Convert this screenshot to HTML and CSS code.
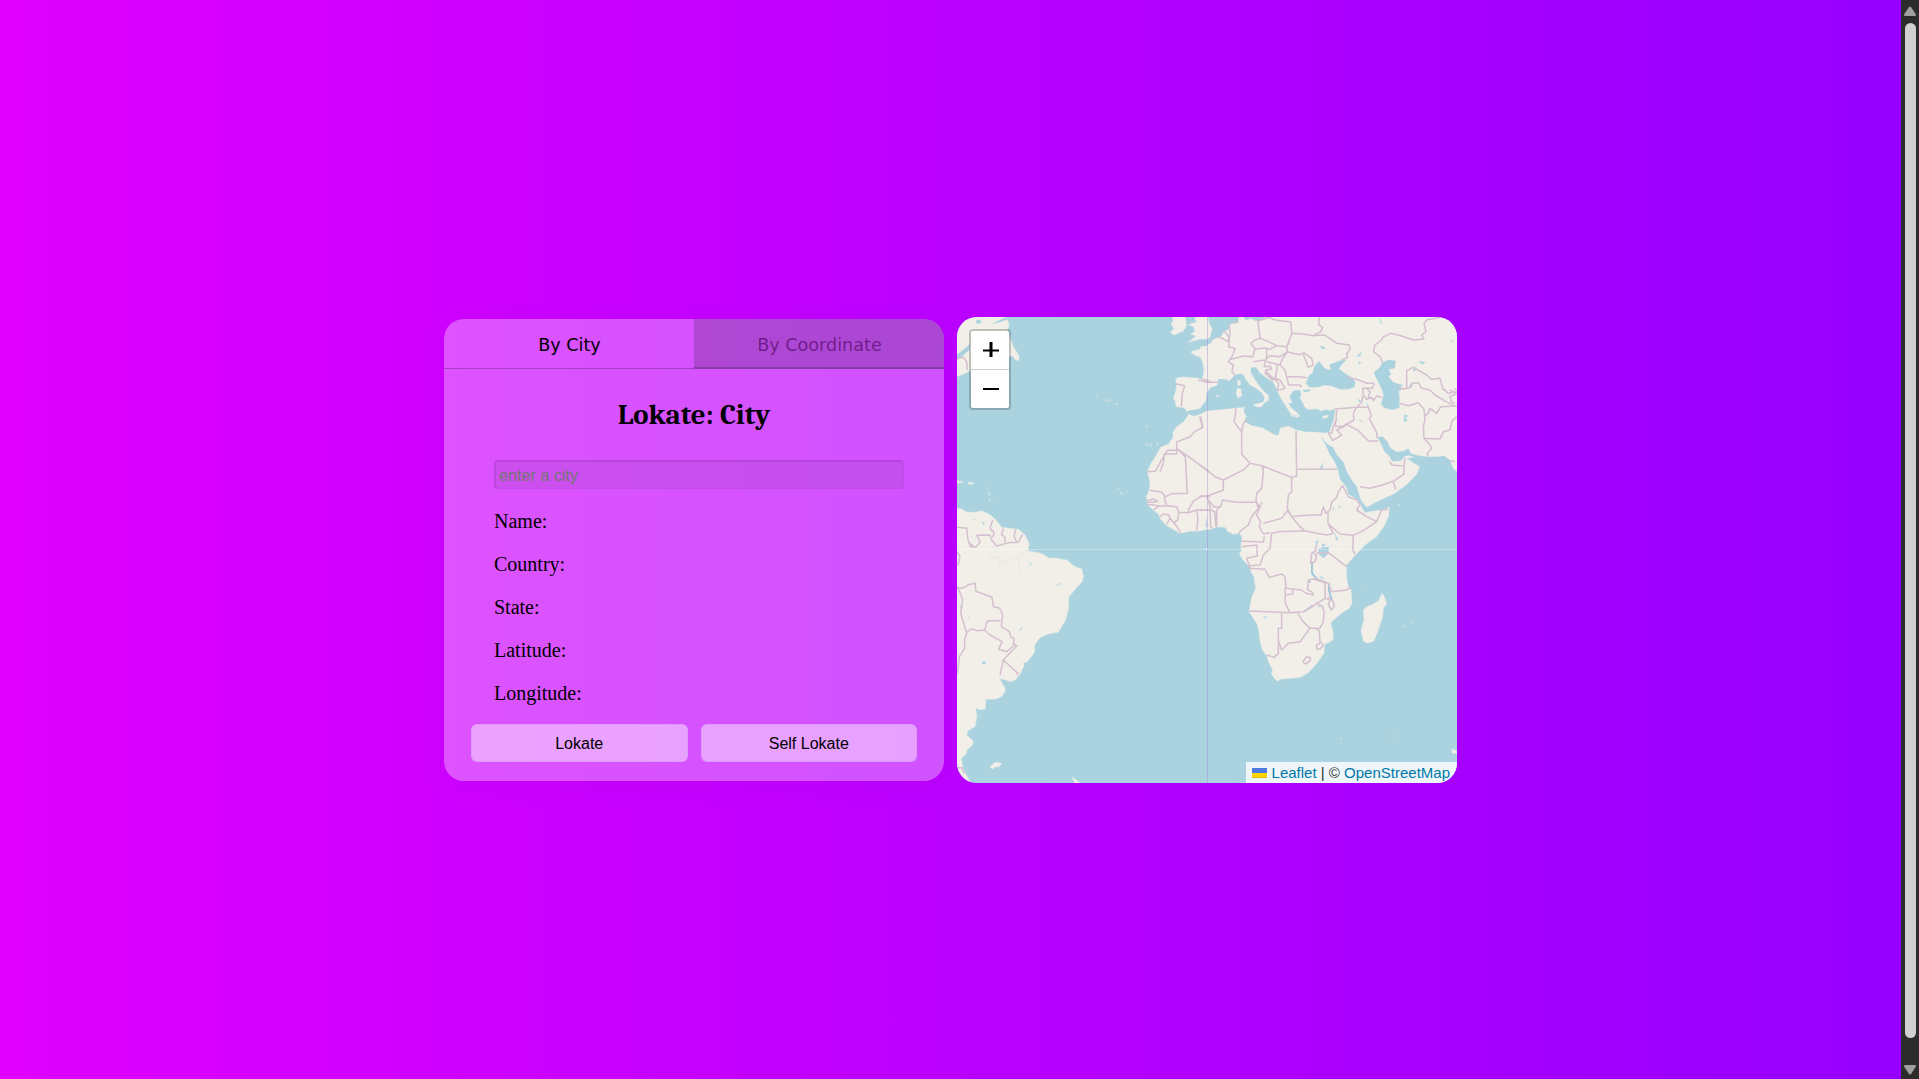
FILE: index.html
```html
<!DOCTYPE html>
<html lang="en">
<head>
<meta charset="utf-8">
<title>Lokate</title>
<link rel="stylesheet" href="styles.css">
</head>
<body>
<main class="page">
  <section class="card">
    <nav class="tabs">
      <button class="tab tab-active">By City</button>
      <button class="tab tab-idle">By Coordinate</button>
    </nav>
    <h2 class="title">Lokate: City</h2>
    <div class="fields">
      <input class="city" type="text" placeholder="enter a city">
      <p>Name:</p>
      <p>Country:</p>
      <p>State:</p>
      <p>Latitude:</p>
      <p>Longitude:</p>
    </div>
    <div class="actions">
      <button class="action">Lokate</button>
      <button class="action">Self Lokate</button>
    </div>
  </section>
  <section class="map">
    <svg class="world" viewBox="21 21 1500 1398" preserveAspectRatio="none">
      <rect x="0" y="0" width="1540" height="1440" fill="#aad3df"/>
      <g class="tiles">
      <g class="land">
        <!-- Newfoundland and Labrador -->
        <path d="M0 0H160L178 45L172 60L190 110L208 138L206 152L196 150L188 138L165 140L150 130L120 150L70 175L50 188L21 200L0 205Z"/>
        <!-- Ireland, Great Britain -->
        <path d="M665 10L705 10L709 48L700 64L690 67L672 76L660 67L672 57L663 40L670 34Z"/>
        <path d="M740 10H772L781 47L789 56L788 76L772 88L750 91L735 97L711 99L738 78L722 72L735 64L730 50L715 44L740 36L734 26Z"/>
        <!-- Europe, Asia and Africa -->
        <path d="M865 10L862 34L840 43L836 58L822 66L812 80L790 88L783 98L770 108L752 109L750 118L730 122L722 126L735 136L750 141L758 160L762 180L757 206L730 203L702 201L690 202L682 203L676 212L680 222L678 240L670 265L676 275L678 290L690 292L702 293L712 306L715 316L700 336L680 350L669 366L669 382L656 402L632 411L616 440L603 460L592 485L597 502L600 523L596 545L588 560L593 572L592 582L609 600L625 612L633 630L650 647L664 655L690 670L720 664L745 664L762 660L782 658L800 651L826 652L832 664L848 672L870 671L876 684L872 710L874 722L868 732L879 750L900 772L903 785L912 800L914 817L917 835L905 862L897 905L910 925L921 942L927 967L930 995L938 1022L950 1037L956 1057L968 1080L963 1090L973 1105L982 1114L995 1107L1025 1105L1052 1102L1075 1088L1100 1061L1122 1030L1124 1003L1138 997L1150 989L1149 965L1142 938L1160 922L1180 906L1198 895L1206 880L1203 838L1195 830L1190 800L1190 765L1210 742L1245 705L1280 680L1301 651L1316 619L1318 590L1300 600L1270 603L1245 608L1234 590L1228 570L1222 556L1250 592L1280 575L1335 550L1372 522L1400 493L1409 470L1390 458L1370 445L1400 440L1460 440L1482 437L1500 450L1510 475L1540 500V10Z"/>
        <!-- Madagascar -->
        <path d="M1297 850L1303 860L1310 882L1301 893L1298 920L1285 960L1272 993L1252 1000L1240 994L1233 960L1242 928L1240 900L1250 890L1270 882L1285 872Z"/>
        <!-- South America -->
        <path d="M0 590L35 597L50 606L75 607L95 602L112 610L125 618L140 632L155 652L180 655L205 658L225 674L238 702L233 722L258 727L278 731L296 744L315 744L350 750L375 770L395 776L401 800L396 815L376 838L357 860L355 900L346 932L325 967L295 972L270 983L254 1005L254 1027L240 1045L222 1068L210 1093L195 1111L180 1115L165 1109L148 1106L160 1125L167 1140L155 1160L135 1168L108 1168L106 1197L92 1200L77 1195L81 1220L75 1250L54 1262L50 1274L60 1284L70 1294L68 1305L51 1320L49 1332L34 1345L38 1370L44 1387L70 1430H0Z"/>
        <path d="M120 1371L135 1357L155 1360L148 1370L135 1371L128 1378ZM366 1402L380 1410L392 1421L375 1419ZM0 505L40 517L30 519L0 516ZM54 517L70 518L70 523L56 523ZM1506 1316L1516 1321L1530 1330L1506 1330Z"/>
      </g>
      <g class="isles">
        <path d="M466 271h10M479 271l5 1M497 280l7 4M587 350h6M586 404h8M598 403l8 5M619 406l7-8M504 534l4 3M511 546l7 8M528 545h4M108 532l4 4M116 545l3 12M119 565v8M78 1222h6M86 1218h6M1360 949h6M1384 938h4M1171 1286h5M1325 1278h5M1343 584h7M1234 843h2M438 260h4M136 578h2"/>
      </g>
      <g class="sea" transform="translate(750 0)">
        <!-- Mediterranean, west to east -->
        <path d="M-38 303L-25 301L0 296L8 285L18 272L20 252L30 235L52 226L56 207L75 208L88 213L105 195L120 191L130 195L138 210L150 226L168 235L185 248L193 264L190 275L175 280L157 285L172 292L185 291L192 280L206 272L207 257L192 244L180 230L163 205L152 186L154 173L168 172L179 188L199 204L219 216L229 236L240 262L253 282L264 299L272 312L290 317L302 320L292 308L275 294L265 280L278 280L269 260L280 242L300 240L303 252L299 263L308 278L312 289L323 299L350 297L363 304L376 299L392 302L405 297L401 328L388 366L372 368L350 366L318 365L288 359L265 347L240 354L234 376L222 373L205 363L188 353L155 346L132 334L140 320L131 302L135 291L110 293L55 299L20 302L0 313L-18 317L-38 311Z"/>
        <!-- Black Sea -->
        <path d="M318 221L326 198L338 188L344 168L357 154L366 164L372 173L384 179L394 178L390 169L388 164L410 156L430 149L438 150L424 165L416 176L430 187L451 200L466 215L464 230L446 237L420 238L398 229L376 225L355 231L330 232ZM308 241L331 238L329 244L312 246Z"/>
        <!-- Caspian Sea -->
        <path d="M522 187L538 174L549 157L567 149L587 153L584 175L565 178L573 192L565 200L580 217L600 224L604 239L595 244L598 260L598 293L577 299L552 293L543 281L548 267L551 253L544 235L534 214L528 203Z"/>
        <!-- Red Sea, Persian Gulf -->
        <path d="M365 382L374 394L386 406L399 412L410 434L430 457L440 485L455 510L470 530L482 571L486 590L470 567L445 552L440 532L420 507L415 480L403 453L388 430L380 411Z"/>
        <path d="M533 382L548 380L561 394L571 414L590 426L610 424L625 416L633 431L660 438L680 441L650 443L626 436L615 438L603 452L576 454L568 437L554 425L544 403Z"/>
        <path d="M25 10L28 40L38 55L31 80L60 78L72 58L90 42L115 35L116 10ZM120 10H190V26L165 33L155 25L138 30Z"/>
        <path d="M-40 98L0 88L24 88L34 96L18 106L-10 111L-25 108ZM0 140L8 160L8 190L0 210Z" opacity=".8"/>
        <!-- Lakes -->
        <path d="M355 716L386 710L385 730L372 744L358 735Z"/>
        <path d="M358 107L373 111L377 117L366 116ZM470 140L486 124L480 138ZM474 154L484 158L478 162ZM539 24L547 44L541 38ZM659 154L676 157L670 162L660 159ZM649 166L643 177ZM613 314L626 318L616 322L622 332L612 335ZM479 328L486 336L480 334ZM472 268L484 272L478 276ZM499 278L508 291L502 288ZM580 222L608 224L600 232ZM726 236L740 241L730 242ZM370 458L367 475L359 476ZM398 602L400 592L403 595ZM415 587L423 590L418 593ZM405 670L414 690L408 691ZM366 700L376 704L368 714ZM347 694L355 692L350 708ZM752 91L760 95L754 97ZM18 625L23 652L18 650Z"/>
        <path class="lake" d="M336 755L336 790L352 808M388 820L386 840L396 870M630 228L637 224M313 905L338 886M327 812L330 818M641 183L645 178"/>
        <path d="M358 798L372 805L366 807ZM190 920L202 920L196 925ZM352 887L366 890L360 892Z"/>
        <!-- Islands in the Mediterranean -->
        <path class="isle" d="M112 210L122 212L121 226L114 228ZM112 235L123 236L125 258L113 265L109 250ZM366 319L386 315L382 323L370 325ZM272 314L297 319L293 322L273 318ZM48 256L57 257L54 262Z"/>
      </g>
      <g class="sea">
        <path d="M21 134L60 103L58 120L40 135L21 150ZM76 34L88 28L94 36L84 42ZM128 40L170 21L176 26L150 36ZM98 635L104 640L100 645ZM96 1055L108 1056L106 1062L96 1061ZM28 885L38 892L34 897ZM318 826L336 819L326 825ZM208 960L217 952L212 962ZM236 755L247 766L241 764ZM220 1060L235 1056L225 1070ZM70 627h5v5ZM53 920l5 2l-3 2Z"/>
      </g>
      <g class="rivers">
        <path d="M112 735L135 747L160 758L180 745L210 740L228 718M150 758V790M210 740L205 760L212 805M118 742L140 740L165 752"/>
      </g>
      <g class="borders">
        <!-- Atlantic side -->
        <path d="M21 145L40 142L50 155L52 180M755 205L765 210L780 214M678 222L685 223L704 227L697 250L694 290M749 319L758 353L735 364L720 380L680 396L680 432M680 415L706 440L712 550L665 551L647 560L634 546L599 541M680 415L720 443L780 487M680 420L652 421L632 455L616 484L592 485M680 432L643 432L640 460L630 485M592 572L610 567L624 574L608 577L592 577M592 583L630 588L650 587L642 560M650 587L680 590L686 607L716 608L740 600L780 601M716 608L715 600L730 574L755 557L780 560M610 600L625 590M630 620L640 612L655 614L660 625L650 643M660 625L678 646M686 607L683 630L672 637L692 668M740 600L744 628L740 662M21 652L50 655L54 690L62 710L78 710L90 697L81 676L120 675L125 690L140 708L175 698L205 697L218 672M128 630L120 655L132 667L128 683M160 655L155 674L165 682L165 696M197 658L192 678L200 696M21 836L45 832L55 824L75 820L78 844L126 862L130 890L148 894L158 914L154 950L178 965L182 980L192 986L190 1008L170 1025L146 1018L156 995L120 975L104 960L112 932L152 932M104 960L84 962L64 957L50 968L38 930L32 910L38 870L24 830M50 968L44 990L44 1015L28 1040L22 1090M188 997L200 1008L160 1050L204 1090L200 1095M160 1050L150 1095M22 725L30 740L24 765M55 697L70 708M21 1373L35 1373L42 1390"/>
        <!-- Europe and the Middle East -->
        <path transform="translate(750 0)" d="M55 80L88 96L86 110L105 116L96 140L85 155L100 165L96 185L105 195M70 60L85 78L88 96M88 42L90 70L86 96M115 35L100 40M174 28L176 60L182 85L165 90L153 100L165 117L158 140L130 138L105 145L86 150M182 85L212 98L230 107L210 118L195 114L165 117M230 107L260 110L262 126L240 140L210 137L195 150L160 155M200 118L200 140L192 170L210 168L215 178L195 180M176 32L208 22L225 30L272 36L276 70L268 90L260 112M276 70L310 72L340 77L362 65L368 52L356 44L358 22M268 90L265 105M340 77L372 74L400 92L410 100L448 105L450 118L440 132L443 142L425 150M262 126L300 134L312 128L335 145L340 165L325 172L308 128M262 126L248 145L240 165L220 160L200 155M240 165L255 180L260 200L300 200L320 203M232 165L226 205L240 210L255 235L240 240M260 200L266 225L300 225L305 232M226 205L236 222L232 240L240 240M195 182L228 212M205 187L195 190L220 212M-5 210L20 217L55 217M520 125L525 105L545 90L548 82L572 70L605 78L640 90L672 87L665 75L678 65L672 40L680 30L720 22M520 125L540 140L548 160M440 202L470 208L500 220L522 220L518 235L488 235L490 255L500 268L515 262L520 272L530 258L545 262M500 235L510 245L505 260L515 266M620 232V182L640 172L680 195L695 208L720 205L728 235L745 250L765 245M595 232L610 237L632 232L636 220L655 218L665 235L690 240L705 255L738 275L770 290M750 255L754 275L765 280M750 240L770 250L755 258M765 235L770 245M598 280L625 287L655 278L672 298L675 330L670 350L672 385L690 405L695 415L682 430L684 438M672 385L720 387L730 365L750 360L755 335L770 320M672 320L685 310L690 295L710 310L722 290L770 288M750 452L765 455M405 297L470 292L486 275L488 258M410 300L408 330L400 350M470 292L460 310L462 330L410 360M470 292L505 292L514 318L508 325L530 368L532 385M410 325L404 348L432 350L437 342L475 362L505 393L535 393M400 350L395 370L385 368L398 392L425 375L410 360L432 350M568 455L576 465L612 468L615 445M612 468L612 492L580 514L540 527L508 535L480 530M580 514L587 538"/>
        <!-- Africa -->
        <path transform="translate(750 0)" d="M107 294V310L102 335L125 365L130 340L142 330M125 365V432L132 440L150 460L186 467L273 502L290 498L288 363M290 478H412M150 460L130 480L70 510L45 500L0 465M0 355L8 350L2 320M70 510V540L28 556L0 560M28 556L20 562L40 590L62 590L68 570L90 574L110 577L170 576L178 590L155 620L145 645L125 660L115 670M186 467L190 485L185 535L170 550L168 570L176 600M186 575L170 615L182 635L178 650L190 672L210 668M275 502V545L265 555L262 595L275 620L262 602L245 625L190 640M275 620L290 618L330 615L363 615L370 590L377 610L390 600L396 575L410 562L415 545L428 527L445 560L470 570L482 585M275 620L300 650L313 662L350 670L380 675L400 670L384 640L384 605M313 662L235 665L215 670L210 715L190 735L180 765L150 767M384 640L400 655L420 672L460 676L490 662L530 635L545 600L565 597M530 635L500 620L470 600L482 580M460 676L458 720L465 732M0 601L30 600L32 650L38 655M25 570L32 600L44 605L48 650M62 590L50 600L50 650M125 694L190 696L193 680M125 710L170 705L172 738L140 745L150 775L195 778L208 802L245 792L255 800L258 835L305 840L318 850L340 855L335 845L323 840L325 810L340 807L375 818L376 865L350 880L340 888L310 905L270 908L148 903M255 835L256 880L270 908M278 835V852L258 855M245 910V955H235V1030L222 1042L200 1035M290 905L310 935L330 955L360 955L370 935L372 905L368 890L350 880M330 955L300 995L265 1000L245 1020L235 990M345 955L358 962L360 995L370 1005L360 1018L350 1016L350 1005L360 1000M310 1053L320 1040L332 1043L330 1052L318 1062L310 1058ZM350 720L335 730L332 760L345 755L350 735L340 730M350 728L385 728L440 770M350 705L345 725M345 805L385 820L395 845L440 840L452 832M376 865L390 870L385 885L395 900L402 890L400 875L385 860"/>
      </g>
      </g>
      <path class="seam" d="M21 718.5H1521"/>
      <path class="meridian" d="M772.5 21V1419"/>
      <path d="M768 714h3v6h-3Z" fill="#fff"/>
    </svg>
    <div class="zoom">
      <button class="zoom-btn" aria-label="Zoom in"><svg viewBox="0 0 16 16"><path d="M0 8.5H16" stroke-width="2"/><path d="M8 0V15" stroke-width="3"/></svg></button>
      <button class="zoom-btn" aria-label="Zoom out"><svg viewBox="0 0 16 16"><path d="M0 8H16" stroke-width="2"/></svg></button>
    </div>
    <div class="credit"><svg class="flag" viewBox="0 0 15 10"><path d="M0 0H15V5H0Z" fill="#4c7be1"/><path d="M0 5H15V10H0Z" fill="#ffd500"/><path d="M0 9H15V10H0Z" fill="#e0bc00"/></svg> <a>Leaflet</a> | © <a>OpenStreetMap</a></div>
  </section>
</main>
<aside class="scrollbar">
  <svg class="arrow" viewBox="0 0 12 10"><path d="M6 0.5Q6.6 0.5 7 1L12 8.5Q12 10 11 10H1Q0 10 0 8.5L5 1Q5.4 0.5 6 0.5Z"/></svg>
  <div class="thumb"></div>
  <svg class="arrow" viewBox="0 0 12 10"><path d="M6 9.5Q6.6 9.5 7 9L12 1.5Q12 0 11 0H1Q0 0 0 1.5L5 9Q5.4 9.5 6 9.5Z"/></svg>
</aside>
</body>
</html>
```
FILE: styles.css
```css
* { box-sizing: border-box; }
body {
  margin: 0;
  height: 1079px;
  display: flex;
  overflow: hidden;
  font-family: "Liberation Serif", serif;
}
.page {
  flex: 1;
  display: flex;
  justify-content: center;
  align-items: center;
  gap: 13px;
  padding-top: 21px;
  background: linear-gradient(to right, #e000ff, #9500ff);
}
.card {
  width: 500px;
  height: 462px;
  border-radius: 20px;
  overflow: hidden;
  background: rgba(255, 255, 255, .32);
  box-shadow: 0 4px 30px rgba(0, 0, 0, .04);
}
.tabs { display: flex; height: 50px; }
.tab {
  flex: 1;
  border: 0;
  padding: 2px 0 0 1px;
  font: 17.6px "DejaVu Sans", sans-serif;
  background: transparent;
  color: #000;
}
.tab-active { border-bottom: 1px solid rgba(80, 40, 100, .4); }
.tab-idle {
  padding-top: 4px;
  background: rgba(94, 50, 120, .33);
  color: rgba(70, 0, 90, .6);
  border-bottom: 2px solid rgba(80, 40, 100, .4);
}
.title {
  margin: 28px 0 0;
  height: 38px;
  line-height: 36px;
  font-family: Cambria, Caladea, "Liberation Serif", serif;
  font-size: 28.8px;
  text-align: center;
}
.fields { padding: 25px 40px 0 50px; }
.city {
  display: block;
  width: 410px;
  height: 29px;
  margin: 0 0 21px;
  padding: 1px 3px;
  border: 1px solid rgba(118, 60, 140, .08);
  border-top: 2px solid rgba(118, 40, 140, .22);
  border-left: 2px solid rgba(118, 40, 140, .18);
  border-radius: 4px;
  background: rgba(118, 60, 140, .15);
  font: 16.2px "Liberation Sans", sans-serif;
}
.city::placeholder { color: #757575; }
.fields p { margin: 0 0 20px; font-size: 20px; line-height: 23px; }
.fields p:last-child { margin-bottom: 19px; }
.actions { display: flex; gap: 13px; padding: 0 27px; }
.action {
  flex: 1;
  height: 38px;
  padding-top: 2px;
  border: 1px solid rgba(200, 140, 240, .35);
  border-radius: 6px;
  background: rgba(255, 255, 255, .46);
  font: 16px "Liberation Sans", sans-serif;
  color: #000;
}
.map {
  position: relative;
  width: 500px;
  height: 466px;
  border-radius: 20px;
  overflow: hidden;
}
.world { display: block; width: 100%; height: 100%; }
.tiles { filter: blur(1.1px); }
.land, .isle { fill: #f2efe9; stroke: #dfe6e3; stroke-width: 1.5; stroke-linejoin: round; }
.sea { fill: #aad3df; stroke: #b8d8e0; stroke-width: 1; stroke-linejoin: round; }
.sea .isle { fill: #f2efe9; }
.isles { fill: none; stroke: #d0e0e1; stroke-width: 5; }
.lake { fill: none; stroke: #93c3dc; stroke-width: 5; }
.rivers { fill: none; stroke: #e1e8e6; stroke-width: 2.5; }
.borders { fill: none; stroke: #d5c0cf; stroke-width: 4.6; stroke-linejoin: round; }
.seam { stroke: rgba(255, 255, 255, .3); stroke-width: 3; }
.meridian { stroke: rgba(170, 130, 215, .4); stroke-width: 3; }
.zoom {
  position: absolute;
  left: 12px;
  top: 12px;
  width: 42px;
  border: 2px solid rgba(0, 0, 0, .2);
  border-radius: 4px;
  background-clip: padding-box;
}
.zoom-btn {
  display: flex;
  align-items: center;
  justify-content: center;
  width: 38px;
  height: 38px;
  padding: 0 0 0 2px;
  border: 0;
  background: #fff;
  border-radius: 0 0 2px 2px;
}
.zoom-btn:first-child { height: 39px; border-bottom: 1px solid #ccc; border-radius: 2px 2px 0 0; }
.zoom-btn svg { width: 16px; height: 16px; stroke: #000; fill: none; }
.credit {
  position: absolute;
  right: 0;
  bottom: 0;
  height: 21px;
  padding: 0 7px 0 6px;
  background: rgba(255, 255, 255, .8);
  color: #333;
  font: 15px/21px "Liberation Sans", sans-serif;
  white-space: nowrap;
}
.credit a { color: #0078a8; }
.flag { width: 15px; height: 10px; }
.scrollbar {
  width: 18px;
  display: flex;
  flex-direction: column;
  align-items: center;
  padding: 6px 0 4px;
  background: #2c2c2c;
}
.arrow { width: 12px; height: 10px; fill: #9f9f9f; }
.thumb { width: 11px; height: 1015px; margin: 7px 0 auto; border-radius: 6px; background: #d0d0d0; }
```
